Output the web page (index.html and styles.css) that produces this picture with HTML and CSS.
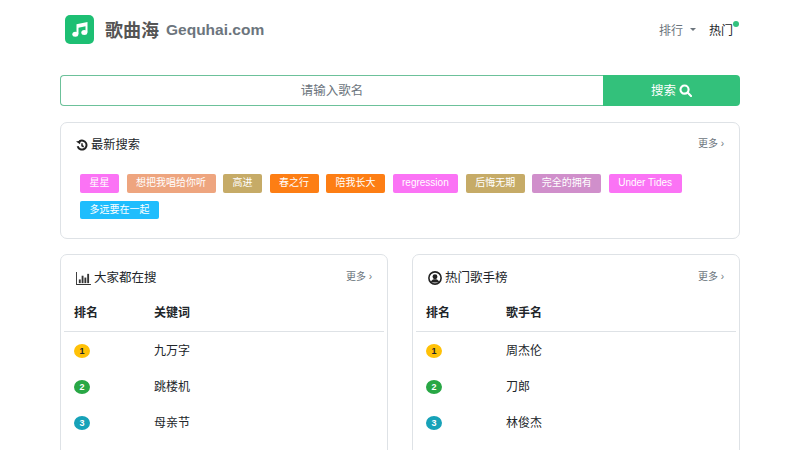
FILE: index.html
```html
<!DOCTYPE html>
<html lang="zh">
<head>
<meta charset="utf-8">
<title>歌曲海</title>
<link rel="stylesheet" href="styles.css">
</head>
<body>
<div class="container">
  <header class="header">
    <div class="brand">
      <span class="logo"><svg width="16" height="15" viewBox="0 0 16 15" fill="#fff"><ellipse cx="3.300" cy="12.300" rx="3" ry="2.500"/><ellipse cx="12.300" cy="10.500" rx="3" ry="2.500"/><path d="M4.500 12V2.300L15.500 0v10.500h-2V4.200L6.500 5.700V12z"/></svg></span>
      <span class="brand-cn">歌曲海</span>
      <span class="brand-en">Gequhai.com</span>
    </div>
    <nav class="nav">
      <span class="nav-item">排行<i class="caret"></i></span>
      <span class="nav-hot">热门<i class="dot"></i></span>
    </nav>
  </header>

  <div class="search">
    <div class="search-input"><span class="search-label">请输入歌名</span></div>
    <div class="search-btn"><span class="search-label">搜索</span>
      <svg width="13" height="13" viewBox="0 0 16 16" fill="none" stroke="#fff" stroke-width="2.600"><circle cx="6.800" cy="6.800" r="5"/><path d="M10.500 10.500l4.300 4.300" stroke-linecap="round"/></svg>
    </div>
  </div>

  <section class="card card-recent">
    <div class="card-head">
      <h2 class="card-title">
        <svg class="ico" width="12" height="12" viewBox="0 0 16 16" fill="none" stroke="#222" stroke-width="2.600"><path d="M4.500 3.200a6 6 0 1 1-2.300 6.500"/><path d="M0 3.200l6.500-1.200-1.200 5z" fill="#222" stroke="none"/><path d="M8 5.500v3.500l2.300 1.300" stroke-width="2"/></svg>
        最新搜索</h2>
      <span class="more">更多 ›</span>
    </div>
    <div class="tags">
      <span class="tag c-pink">星星</span>
      <span class="tag c-salmon">想把我唱给你听</span>
      <span class="tag c-khaki">高进</span>
      <span class="tag c-orange">春之行</span>
      <span class="tag c-orange">陪我长大</span>
      <span class="tag c-pink">regression</span>
      <span class="tag c-khaki">后悔无期</span>
      <span class="tag c-plum">完全的拥有</span>
      <span class="tag c-pink">Under Tides</span>
      <span class="tag c-blue">多远要在一起</span>
    </div>
  </section>

  <div class="columns">
    <section class="card card-rank">
      <div class="card-head rank-head">
        <h2 class="card-title rank-title">
          <svg class="ico" width="15" height="13" viewBox="0 0 16 14" fill="#333"><path d="M0 0h1v13h15v1H0z"/><rect x="3" y="8" width="2" height="4"/><rect x="6" y="4" width="2" height="8"/><rect x="9" y="6" width="2" height="6"/><rect x="12" y="2" width="2" height="10"/></svg>
          大家都在搜</h2>
        <span class="more">更多 ›</span>
      </div>
      <div class="row row-th"><span class="col-a">排名</span><span>关键词</span></div>
      <div class="row"><span class="col-a"><b class="badge b1">1</b></span><span>九万字</span></div>
      <div class="row"><span class="col-a"><b class="badge b2">2</b></span><span>跳楼机</span></div>
      <div class="row"><span class="col-a"><b class="badge b3">3</b></span><span>母亲节</span></div>
    </section>
    <section class="card card-rank">
      <div class="card-head rank-head">
        <h2 class="card-title rank-title">
          <svg class="ico" width="14" height="14" viewBox="0 0 16 16" fill="none" stroke="#222" stroke-width="1.800"><circle cx="8" cy="8" r="7"/><circle cx="8" cy="6.500" r="2.800" fill="#222" stroke="none"/><path d="M3 13c1-3 3-3.500 5-3.500s4 .5 5 3.500z" fill="#222" stroke="none"/></svg>
          热门歌手榜</h2>
        <span class="more">更多 ›</span>
      </div>
      <div class="row row-th"><span class="col-a">排名</span><span>歌手名</span></div>
      <div class="row"><span class="col-a"><b class="badge b1">1</b></span><span>周杰伦</span></div>
      <div class="row"><span class="col-a"><b class="badge b2">2</b></span><span>刀郎</span></div>
      <div class="row"><span class="col-a"><b class="badge b3">3</b></span><span>林俊杰</span></div>
    </section>
  </div>
</div>
</body>
</html>
```
FILE: styles.css
```css
* { box-sizing: border-box; }
html, body { margin: 0; height: 450px; overflow: hidden; background: #fff; }
body { font-family: "Liberation Sans", "Noto Sans CJK SC", sans-serif; color: #212529; font-size: 12px; }
.container { width: 680px; margin: 0 auto; }
.header { height: 75px; padding: 15px 7px 0 5px; display: flex; justify-content: space-between; align-items: flex-start; }
.brand { display: flex; align-items: center; height: 29px; }
.logo { width: 29px; height: 29px; border-radius: 5px; background: #1dbf73; display: flex; align-items: center; justify-content: center; }
.brand-cn { margin: 0 0 2px 11px; font-size: 18px; font-weight: 700; color: #555; }
.brand-en { margin-left: 7px; font-size: 15.500px; font-weight: 700; color: #6c757d; }
.nav { display: flex; align-items: center; height: 29px; font-size: 12px; }
.nav-item { color: #6c757d; display: flex; align-items: center; }
.caret { width: 0; height: 0; margin-left: 7px; border: 3px solid transparent; border-top-color: #6c757d; border-bottom: 0; }
.nav-hot { margin-left: 13px; color: #212529; position: relative; }
.dot { position: absolute; top: 0; right: -6px; width: 6px; height: 6px; border-radius: 50%; background: #32c27d; }
.search { display: flex; height: 31px; }
.search-label { font-size: 12.500px; margin-bottom: 2px; }
.search-input { flex: 1; border: 1px solid #6cc19a; border-right: 0; border-radius: 4px 0 0 4px; color: #6c757d; display: flex; align-items: center; justify-content: center; }
.search-btn { width: 137px; background: #33c17b; color: #fff; border-radius: 0 4px 4px 0; display: flex; align-items: center; justify-content: center; gap: 3px; }
.card { border: 1px solid #dee2e6; border-radius: 7px; background: #fff; }
.card-recent { margin-top: 16px; height: 117px; padding: 14px 15px 0 15px; }
.card-head { display: flex; justify-content: space-between; align-items: flex-start; }
.card-title { margin: 0; font-size: 12.250px; font-weight: 400; line-height: 16px; color: #212529; display: flex; align-items: center; gap: 3px; }
.rank-title { font-size: 12.500px; margin-top: 1px; }
.more { font-size: 10px; line-height: 14px; color: #6c757d; }
.rank-head .more { margin-top: 1px; }
.tags { display: flex; flex-wrap: wrap; gap: 8px 7.500px; margin: 21px 0 0 4px; }
.tag { height: 18.500px; padding: 0 9.500px; border-radius: 2px; color: #fff; font-size: 10px; line-height: 18px; }
.c-pink { background: #fb73f5; }
.c-salmon { background: #eea57f; }
.c-khaki { background: #c6ab67; }
.c-orange { background: #fd7e14; }
.c-plum { background: #d08fcb; }
.c-blue { background: #1fbdfd; }
.columns { display: grid; grid-template-columns: 328px 328px; gap: 24px; margin-top: 15px; height: 196px; overflow: hidden; }
.card-rank { height: 240px; padding: 14px 3px 0 3px; }
.rank-head { padding: 0 12px 0 12px; height: 22px; }
.row { display: flex; align-items: center; height: 36px; padding-left: 10px; }
.row-th { height: 41px; margin-bottom: -1px; font-weight: 700; border-bottom: 1px solid #dee2e6; }
.col-a { width: 80px; }
.badge { display: block; width: 16px; height: 14px; margin-top: 3px; border-radius: 50%; font-size: 9px; line-height: 14px; font-weight: 700; text-align: center; color: #fff; }
.b1 { background: #ffc107; color: #212529; }
.b2 { background: #28a745; }
.b3 { background: #17a2b8; }
```
